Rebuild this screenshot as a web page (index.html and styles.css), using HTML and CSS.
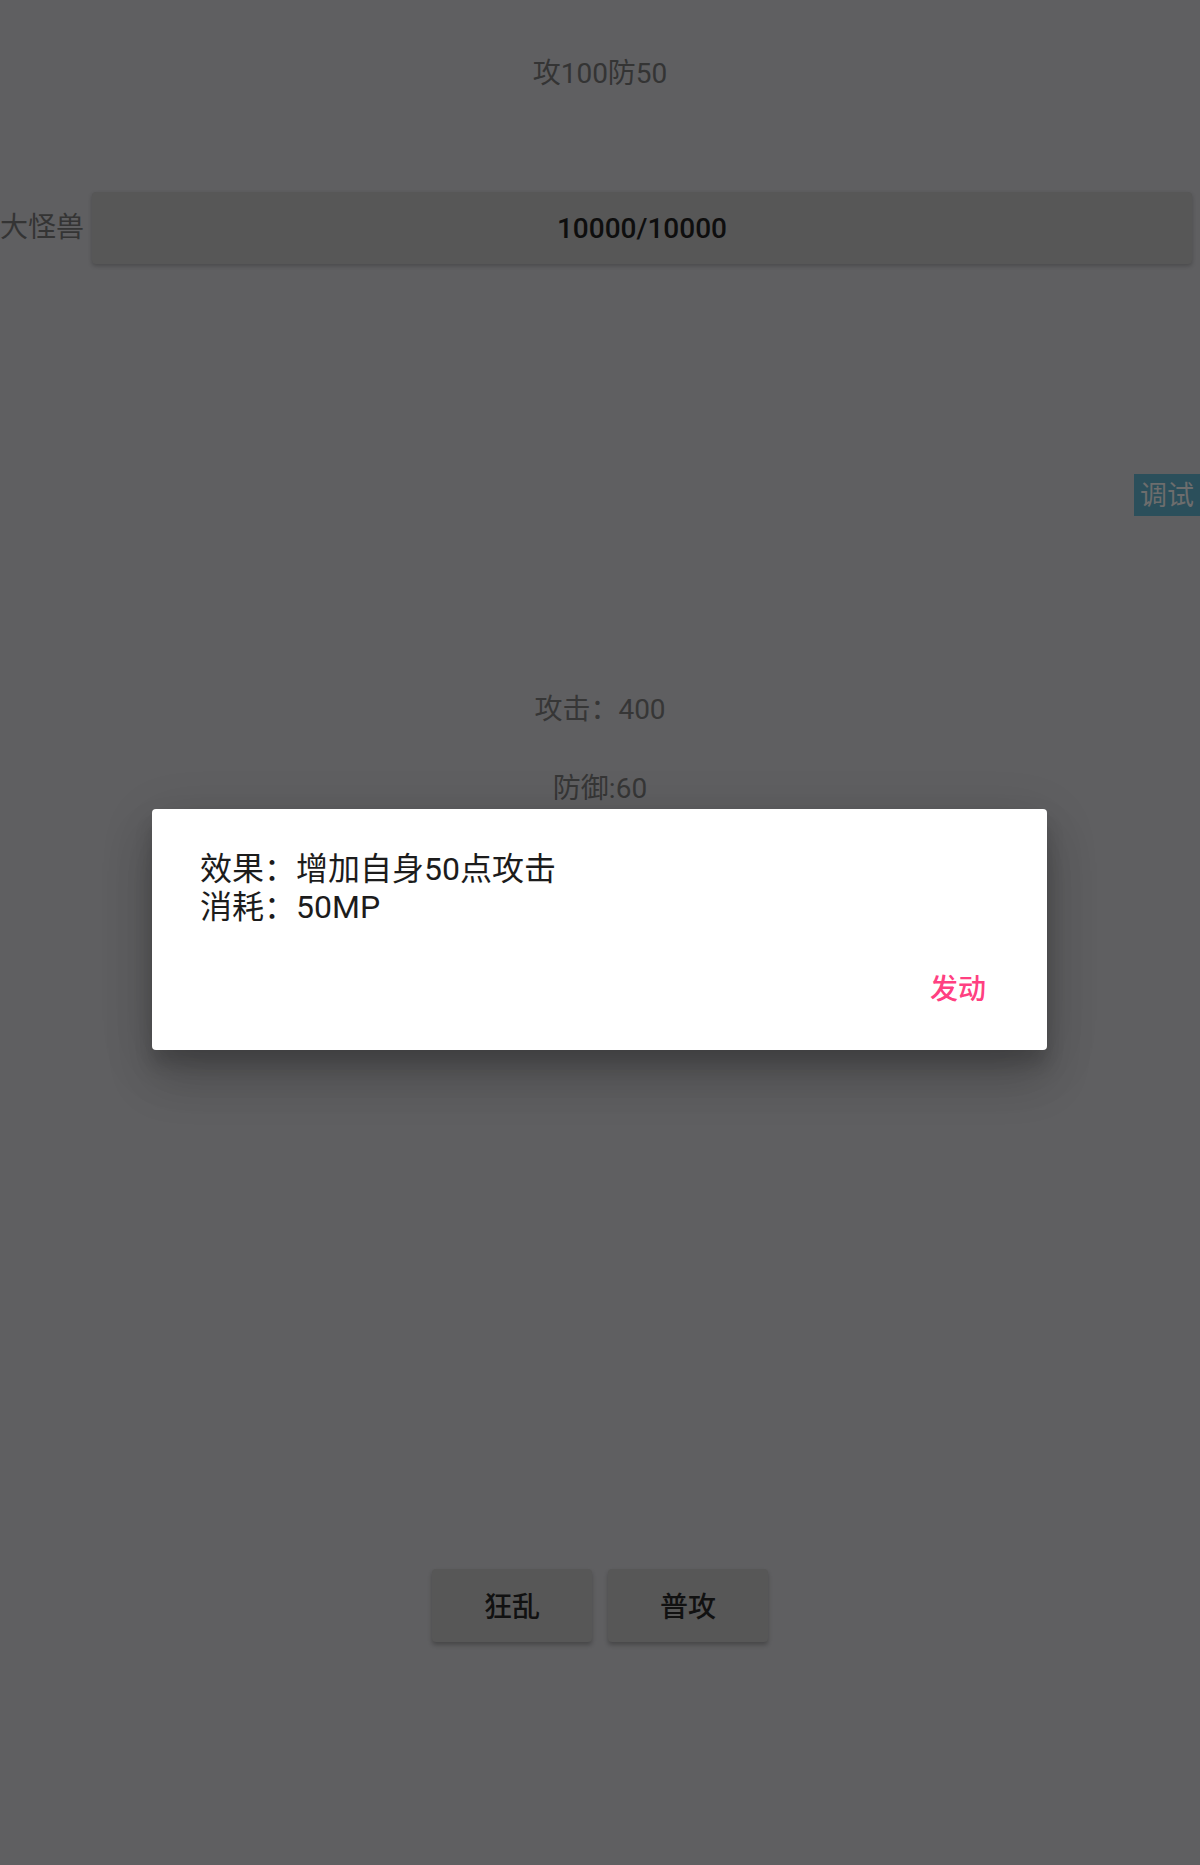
FILE: index.html
```html
<!DOCTYPE html>
<html lang="zh-CN">
<head>
<meta charset="utf-8">
<title>大怪兽</title>
<link rel="stylesheet" href="styles.css">
</head>
<body>
<div class="page">
  <div class="title">攻100防50</div>
  <div class="hp-row">
    <div class="hp-label">大怪兽</div>
    <div class="hp-bar">10000/10000</div>
  </div>
  <div class="stat stat-atk">攻击：400</div>
  <div class="stat stat-def">防御:60</div>
  <div class="actions">
    <div class="btn">狂乱</div>
    <div class="btn">普攻</div>
  </div>

  <div class="debug">调试</div>

  <div class="dialog">
    <div class="dialog-msg">
      <div>效果：增加自身50点攻击</div>
      <div>消耗：50MP</div>
    </div>
    <div class="dialog-actions">
      <span class="dialog-btn">发动</span>
    </div>
  </div>
</div>
</body>
</html>
```

FILE: styles.css
```css
html, body {
  margin: 0;
  padding: 0;
  background: #5f5f61;
}

body {
  font-family: Roboto, "Noto Sans CJK SC", sans-serif;
  font-size: 28px;
  color: #333333;
}

.page {
  position: relative;
  width: 1200px;
  height: 1865px;
  display: flex;
  flex-direction: column;
  overflow: hidden;
}

.title {
  padding-top: 54px;
  height: 40px;
  line-height: 40px;
  text-align: center;
  color: #343434;
}

.hp-row {
  margin-top: 98px;
  height: 72px;
  display: flex;
  align-items: center;
  padding-right: 8px;
}

.hp-label {
  width: 92px;
  line-height: 40px;
  color: #343434;
}

.hp-bar {
  flex: 1;
  height: 72px;
  box-sizing: border-box;
  padding-top: 2px;
  line-height: 70px;
  text-align: center;
  background: #575757;
  border-radius: 4px;
  box-shadow: 0 2px 4px rgba(0, 0, 0, 0.22);
  color: #0e0e0e;
  font-weight: 500;
}

.stat {
  height: 40px;
  line-height: 40px;
  text-align: center;
  color: #363636;
}

.stat-atk {
  margin-top: 426px;
}

.stat-def {
  margin-top: 39px;
}

.actions {
  margin-top: 760px;
  display: flex;
  justify-content: center;
  gap: 16px;
}

.btn {
  width: 160px;
  height: 73px;
  box-sizing: border-box;
  padding-top: 4px;
  line-height: 69px;
  text-align: center;
  background: #575757;
  border-radius: 4px;
  box-shadow: 0 3px 4px rgba(0, 0, 0, 0.25);
  color: #111111;
  font-weight: 500;
}

.debug {
  position: absolute;
  left: 1134px;
  top: 474px;
  width: 66px;
  height: 42px;
  box-sizing: border-box;
  padding-top: 2px;
  line-height: 40px;
  text-align: center;
  background: #2b4f5b;
  color: #6d6d6d;
  font-size: 27px;
}

.dialog {
  position: absolute;
  left: 152px;
  top: 809px;
  width: 895px;
  height: 241px;
  box-sizing: border-box;
  background: #ffffff;
  border-radius: 4px;
  box-shadow: 0 30px 48px rgba(0, 0, 0, 0.16), 0 12px 56px rgba(0, 0, 0, 0.12), 0 14px 18px rgba(0, 0, 0, 0.14);
  padding: 41px 48px 0 48px;
  display: flex;
  flex-direction: column;
}

.dialog-msg {
  font-size: 32px;
  line-height: 38px;
  color: #1c1c1c;
}

.dialog-actions {
  margin-top: 44px;
  display: flex;
  justify-content: flex-end;
  padding-right: 13px;
}

.dialog-btn {
  font-size: 28px;
  line-height: 40px;
  font-weight: 500;
  color: #ff4081;
}
```
